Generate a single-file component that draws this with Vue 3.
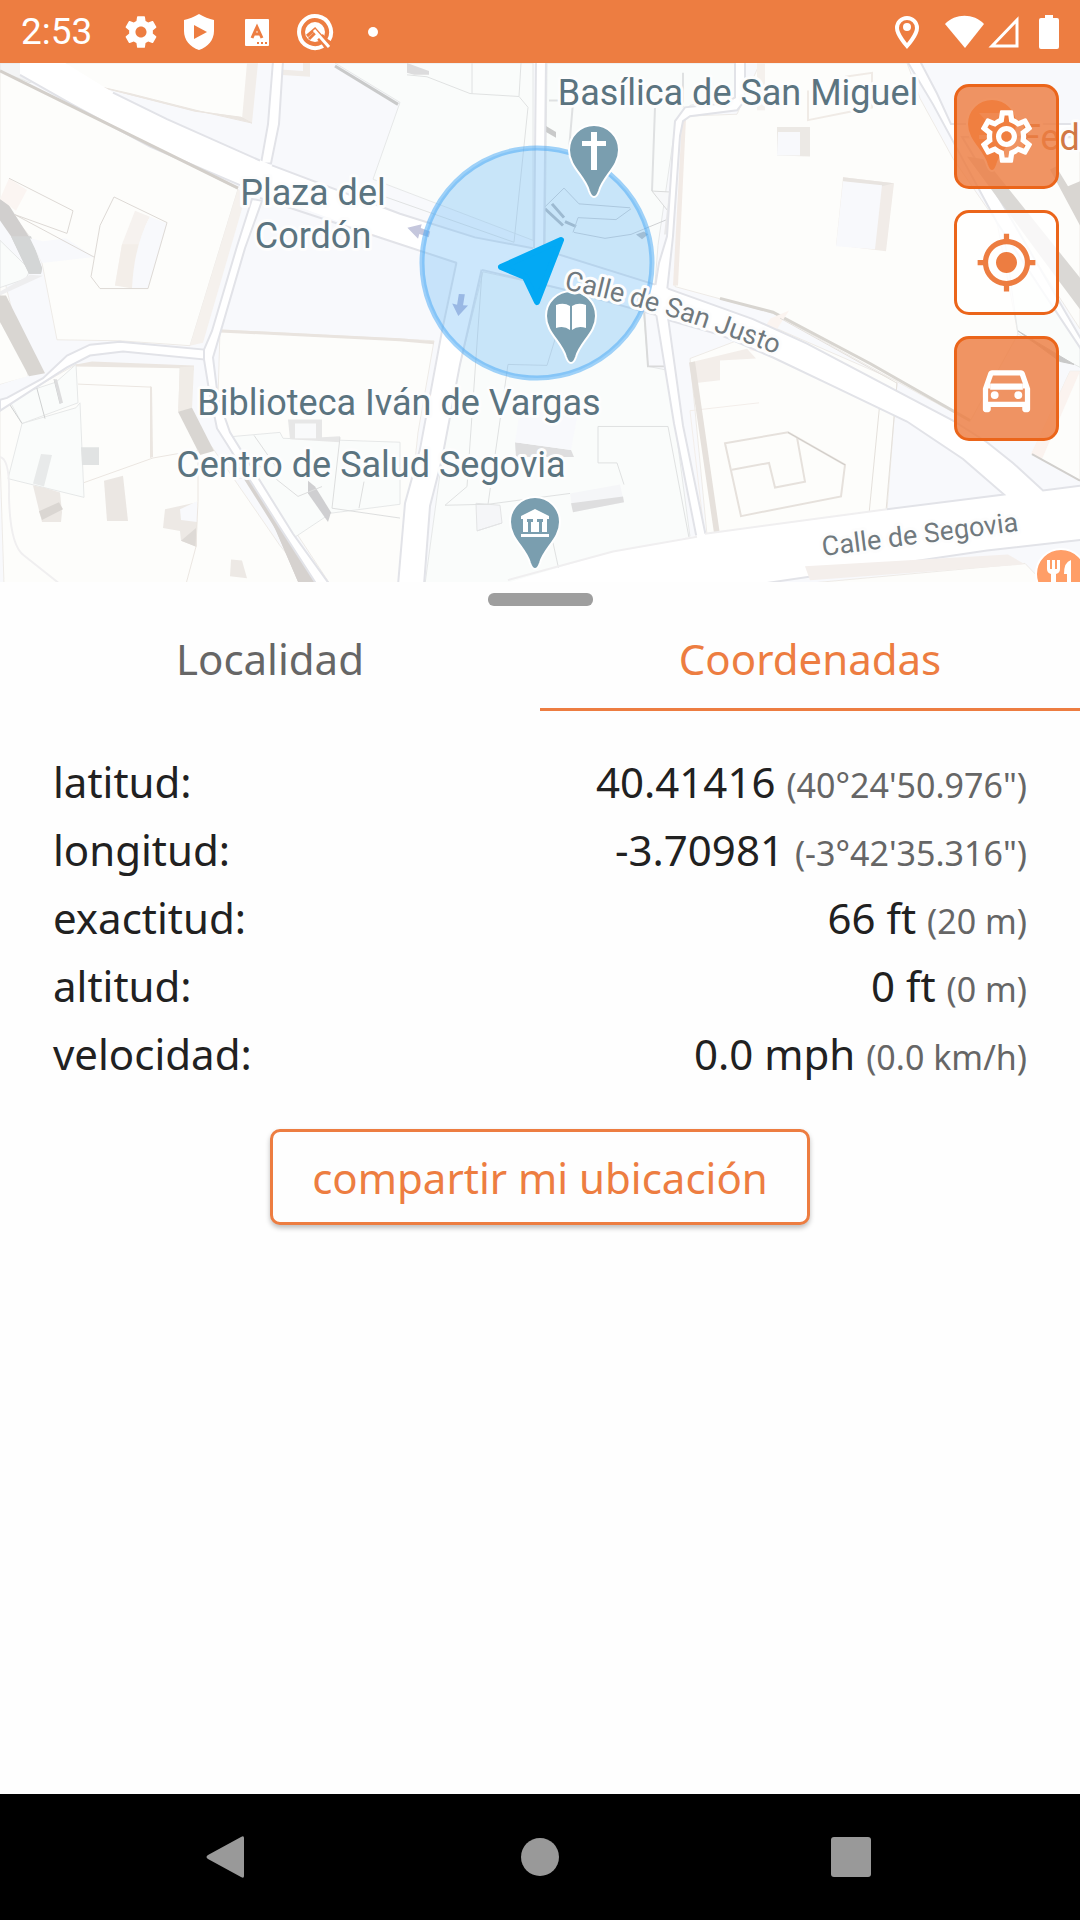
<script setup>
import { ref } from "vue";

const tabs = [
  { id: "town", label: "Localidad" },
  { id: "coords", label: "Coordenadas" },
];
const activeTab = ref("coords");

const rows = [
  { name: "latitud:", value: "40.41416", alt: "(40°24'50.976\")" },
  { name: "longitud:", value: "-3.70981", alt: "(-3°42'35.316\")" },
  { name: "exactitud:", value: "66 ft", alt: "(20 m)" },
  { name: "altitud:", value: "0 ft", alt: "(0 m)" },
  { name: "velocidad:", value: "0.0 mph", alt: "(0.0 km/h)" },
];

const pinPath =
  "M0 47c-3 0-4-3-5-6C-9 26-25 17-25 0A25 25 0 1 1 25 0C25 17 9 26 5 41c-1 3-2 6-5 6z";
</script>

<template>
  <div class="screen">
    <header class="status">
      <span class="clock">2:53</span>
      <div class="notifications">
        <svg width="38" height="38" viewBox="0 0 24 24" fill="#fff">
          <path d="M19.43 12.98c.04-.32.07-.64.07-.98s-.03-.66-.07-.98l2.11-1.65c.19-.15.24-.42.12-.64l-2-3.46c-.12-.22-.39-.3-.61-.22l-2.49 1c-.52-.4-1.08-.73-1.69-.98l-.38-2.65C14.46 2.18 14.25 2 14 2h-4c-.25 0-.46.18-.49.42l-.38 2.65c-.61.25-1.17.59-1.69.98l-2.49-1c-.23-.09-.49 0-.61.22l-2 3.46c-.13.22-.07.49.12.64l2.11 1.65c-.04.32-.07.65-.07.98s.03.66.07.98l-2.11 1.65c-.19.15-.24.42-.12.64l2 3.46c.12.22.39.3.61.22l2.49-1c.52.4 1.08.73 1.69.98l.38 2.65c.03.24.24.42.49.42h4c.25 0 .46-.18.49-.42l.38-2.65c.61-.25 1.17-.59 1.69-.98l2.49 1c.23.09.49 0 .61-.22l2-3.46c.12-.22.07-.49-.12-.64l-2.11-1.65zM12 15.5c-1.93 0-3.5-1.57-3.5-3.5s1.57-3.5 3.5-3.5 3.5 1.57 3.5 3.5-1.57 3.5-3.5 3.5z" />
        </svg>
        <svg width="38" height="38" viewBox="0 0 38 38">
          <path d="M19 1C14 4 9 6 4 7v11c0 9 6 16 15 19 9-3 15-10 15-19V7C29 6 24 4 19 1z" fill="#fff" />
          <path d="M14 12v14l13-7z" fill="#ed7d41" />
        </svg>
        <svg width="38" height="38" viewBox="0 0 38 38">
          <rect x="7" y="6" width="24" height="27" rx="1" fill="#fff" />
          <path d="M14 25l5-11 5 11M16 21h6" fill="none" stroke="#ed7d41" stroke-width="3" />
          <path d="M19 29h2v2h-2zM23 29h2v2h-2zM27 29h2v2h-2z" fill="#ed7d41" />
        </svg>
        <svg width="38" height="38" viewBox="0 0 38 38">
          <path d="M27 33A16 16 0 1 1 33 27" fill="none" stroke="#fff" stroke-width="4" />
          <circle cx="19" cy="19" r="10" fill="#fff" />
          <path d="M11 23l8-7 14 16" fill="none" stroke="#ed7d41" stroke-width="3" />
          <path d="M13 26l7-7" stroke="#ed7d41" stroke-width="3" />
          <path d="M24 24l10 10" stroke="#ed7d41" stroke-width="8" />
          <path d="M26 22l8 9" stroke="#ed7d41" stroke-width="2" />
          <path d="M18 17l15 17" stroke="#fff" stroke-width="3" />
        </svg>
        <svg width="38" height="38" viewBox="0 0 38 38">
          <circle cx="19" cy="19" r="5" fill="#fff" />
        </svg>
      </div>
      <div class="signals">
        <svg width="24" height="36" viewBox="0 0 24 36">
          <path d="M12 4a10 10 0 0 0-10 10c0 7 10 18 10 18s10-11 10-18A10 10 0 0 0 12 4z" fill="none" stroke="#fff" stroke-width="4" />
          <circle cx="12" cy="13" r="4" fill="#fff" />
        </svg>
        <svg class="wifi" width="39" height="36" viewBox="0 0 39 36">
          <path d="M0 10C10-1 29-1 39 10L20 34z" fill="#fff" />
        </svg>
        <svg width="32" height="36" viewBox="0 0 32 36">
          <path d="M4 32L29 6v26z" fill="none" stroke="#fff" stroke-width="3" />
        </svg>
        <svg class="battery" width="20" height="36" viewBox="0 0 20 36">
          <path d="M6 1h8v3h4q2 0 2 2v27q0 2-2 2H2q-2 0-2-2V6q0-2 2-2h4z" fill="#fff" />
        </svg>
      </div>
    </header>

    <section class="map">
      <svg class="tiles" viewBox="0 0 1080 519" preserveAspectRatio="xMidYMid slice">
        <rect width="1080" height="519" fill="#f8f9fc" />

        <g transform="scale(1 .985)">
          <!-- buildings -->
          <g fill="#fdfdfb" stroke="#eeebe7" stroke-width="1">
            <path d="M0 7L238 128L190 287L120 282L57 281L42 203L32 179L0 138z" />
            <path d="M62 0L95 23L193 48L250 57L256 0z" />
            <path d="M0 202V326L28 317z" />
            <path d="M76 306L180 308L179 350L212 390L280 490L312 529H4L0 400V350z" />
            <path d="M220 271L434 282L418 375L402 529H330L230 375L218 340z" />
            <path d="M685 54L737 52L760 0H907L920 36L953 97L997 162L1018 275L970 364L853 299L773 254L675 227z" />
            <path d="M690 300L773 268L897 323L887 453L720 480L707 479z" />
            <path d="M1070 313H1080V424L1032 397z" />
            <path d="M800 529L1025 508L1045 529z" />
            <path d="M960 76H1080V270L1000 145z" />
          </g>
          <g fill="#fafcfb" stroke="#e6e8e8" stroke-width="1">
            <path d="M335 0L400 40L373 118L533 180V0z" />
            <path d="M547 0H735V35L690 43L676 58L658 185L655 225L545 190z" />
            <path d="M483 212L560 229L642 232L648 308L668 312L690 481L540 529H425L442 402L460 306z" />
            <path d="M0 180L30 210L26 219L0 228zM80 345L84 441L8 422L22 366L76 350zM8 340L56 324L76 306L78 345L22 366z" />
            <path d="M224 380L280 375L283 381L400 385V448L331 457L294 482z" />
            <path d="M0 0H60L30 20L0 8z" fill="#f3f4f5" />
            <path d="M1000 145L1080 280V309L1018 275z" />
          </g>

          <!-- extruded walls and roof edges -->
          <path d="M238 128L246 134L203 284L190 287z" fill="#f5f1ed" />
          <path d="M0 138L8 143L30 178L42 208L41 214H29L11 176L0 160z" fill="#d1cfce" />
          <path d="M11 176L31 176L42 208L41 214H29z" fill="#d4d6d6" />
          <path d="M0 232L30 215L43 216L0 236z" fill="#eeeeef" />
          <path d="M0 236L6 236L45 315L29 318L0 263z" fill="#d9d6d2" />
          <path d="M0 264V326L28 318z" fill="#fdfdfb" />
          <path d="M9 117L27 129L16 150L0 138z" fill="#fbf5f2" />
          <path d="M43 181L66 178L94 197L42 203L30 178z" fill="#f8f9fc" />
          <path d="M135 150L150 156Q138 175 138 228L115 226L122 184z" fill="#f6f2ef" />
          <path d="M122 184H140L132 229L115 226z" fill="#f3eee9" />
          <path d="M150 156L167 163L148 229H132Q134 185 150 156z" fill="#f8f9fc" />
          <path d="M247 0H258L252 61L242 57z" fill="#f2eeea" />
          <path d="M95 23L130 31L200 49L252 61L241 55L195 49z" fill="#ebe6e1" stroke="#ebe6e1" />
          <path d="M273 6L303 8V0H310V14L278 12z" fill="#f0ece8" />
          <path d="M335 3L398 42" stroke="#c9caca" stroke-width="3" />
          <path d="M76 306L92 303L194 307V312L180 310L76 308z" fill="#ebe6e1" />
          <path d="M180 309L194 308L192 351L178 354z" fill="#f0ece7" />
          <path d="M178 354L192 350L214 394L200 398z" fill="#d9d6d2" />
          <path d="M232 420L252 424L276 475L299 529H317L293 480L255 424z" fill="#d6d2cf" />
          <path d="M230 400L250 422L286 467L317 529H299L276 474z" fill="#d6d2cf" />
          <path d="M220 272L400 281L434 284" stroke="#e9e4df" stroke-width="3" fill="none" />
          <path d="M81 390H99V408H82z" fill="#e1e3e3" />
          <path d="M41 397L52 398L44 430L33 427z" fill="#e8eaea" />
          <path d="M33 429L44 431L60 436L62 456L61 466H42L39 454z" fill="#ece8e4" />
          <path d="M39 455L59 446L63 453L42 464z" fill="#dad6d2" />
          <path d="M104 424L123 419L128 465H107z" fill="#ebe7e3" />
          <path d="M165 453L197 446V491L181 485L180 475L163 472z" fill="#ede9e5" />
          <path d="M180 453L197 445V466L181 464z" fill="#f8f9fc" />
          <path d="M181 485L196 472V491z" fill="#dedad6" />
          <path d="M231 504L242 505L247 523L230 521z" fill="#ede9e5" />
          <path d="M288 362L322 362V380L340 379V385L290 382z" fill="#e7e7e7" />
          <path d="M295 366H316V381H295z" fill="#f9fafb" />
          <path d="M308 424L315 430L331 456L328 466L308 437z" fill="#cfcfd1" />
          <path d="M150 328L152 329L153 400L150 401z" fill="#ebe6e1" />
          <path d="M78 326L150 329M84 426L153 401L198 393V445M198 445L196 491L186 529" fill="none" stroke="#ebe6e1" />
          <path d="M9 117L73 150L67 173L15 154L94 197M114 136L167 162L148 229H100L91 217L100 165z" fill="none" stroke="#ddd9d5" />
          <path d="M36 327L45 361M54 321L60 346M6 341L22 366" fill="none" stroke="#cfd1d1" />
          <path d="M54 321L57 321L63 345L60 346z" fill="#dcdcdd" />
          <path d="M227 383L298 440L322 430M254 378L276 410M340 380L332 452L400 462M364 425L359 452" fill="none" stroke="#dddede" />
          <path d="M407 0L429 8V12L414 12L407 10z" fill="#dcdcdd" />
          <path d="M407 12L427 14L470 31L519 34L528 45L514 182L380 134M472 0V31M521 0L519 34" fill="none" stroke="#e0e2e2" />
          <path d="M546 64L556 70V76L546 70z" fill="#c9caca" />
          <path d="M549 38H600M573 40L569 88M655 45L652 130M683 10V45" fill="none" stroke="#dfe1e2" stroke-width="2" />
          <path d="M545 148L563 165M552 143L564 157M565 161L576 166" fill="none" stroke="#b9bcbf" stroke-width="3" />
          <path d="M564 127L579 143L630 147M573 172L578 157L616 159L631 148M574 172L605 178L631 174L674 156M655 130L674 158M564 127L545 146" fill="none" stroke="#cfd1d3" />
          <path d="M636 174L644 171L648 174L642 179z" fill="#bfc2c5" />
          <path d="M652 130L671 131L674 158z" fill="#f7f8f9" stroke="#d9dada" />
          <path d="M676 73H680L667 174L664 174z" fill="#e9e9ea" />
          <path d="M682 56L686 56L678 226L673 226z" fill="#f2ebe6" />
          <path d="M777 65H810V95L777 94z" fill="#ece9e5" />
          <path d="M778 70H800V94H777z" fill="#f8f9fc" />
          <path d="M843 116L894 122L886 191L836 185z" fill="#f1ece8" />
          <path d="M843 116L894 122L882 125L843 120z" fill="#e8e4e0" />
          <path d="M843 120L882 124L875 189L836 186z" fill="#f8f9fc" />
          <path d="M720 239L773 253L870 305L970 363" fill="none" stroke="#d8d5d0" stroke-width="3" />
          <path d="M757 0H765V48H757z" fill="#f5f1ed" />
          <path d="M808 28V58L872 45V10L845 14" fill="none" stroke="#f0ebe6" stroke-width="2" />
          <path d="M690 304L747 290L756 300L720 302V322L694 325z" fill="#f3eeea" />
          <path d="M759 345L690 353L706 492" fill="none" stroke="#f3eeea" />
          <path d="M689 304L695 303L720 479L716 491z" fill="#e6e1dc" />
          <path d="M773 262L780 259L760 290L755 289z" fill="#fbf4f0" stroke="#fbf4f0" stroke-width="7" />
          <path d="M780 259L897 325L886 455L869 458L881 333L773 272" fill="none" stroke="#e4e0db" />
          <path d="M725 386L788 375L845 408L841 440L741 460zM732 413L769 406L775 431L805 425L797 380" fill="none" stroke="#e6e1dc" stroke-width="2" />
          <path d="M788 375L845 408" stroke="#cfccc8" />
          <path d="M515 385L571 393L574 400H516z" fill="#dededf" />
          <path d="M520 351L577 360L571 393L515 385z" fill="#f8f9fc" />
          <path d="M570 437L620 428L624 446L573 456z" fill="#f5f6f8" />
          <path d="M571 447L623 440L624 446L573 456z" fill="#dededf" />
          <path d="M476 447L500 449L502 467L477 475zM477 475L502 467" fill="#f5f6f8" stroke="#e3e4e5" />
          <path d="M598 369H668L692 498L560 527M598 369V406H617L624 428M482 212L467 430L445 449L488 448L570 437M508 306L547 307L560 264M508 306L488 448M553 487L562 529" fill="none" stroke="#dfe1e1" />
          <path d="M587 225L643 235L648 308H665L668 311" fill="none" stroke="#d9dada" stroke-width="2" />

          <!-- streets -->
          <g fill="#fff" stroke="#e2e3e8" stroke-width="2">
            <path d="M0 342L7 340L43 320L67 297L90 286L120 283L204 291L204 301L123 293L90 297L67 309L0 353z" />
            <path d="M252 138L237 186L212 272L204 291V301L209 332L217 371L277 467L317 530H330L293 478L230 375L218 340L213 299L220 275L245 188L262 140z" />
            <path d="M273-2L268 62L261 102H271L279 62L283-2z" />
            <path d="M536-2L534 192H544L546-2z" />
            <path d="M457 200L442 272L420 392L405 447L398 530H424L430 450L442 402L460 306L482 208z" />
            <path d="M735-2V35L725 41L685 45L675 59L673 83L667 176L659 203L655 228L667 232L673 176L680 74L683 59L690 54L737 48L745 38V-2z" />
            <path d="M656 254L674 366L697 484L706 481L683 368L668 258z" />
            <path d="M907-2L933 42L997 162L1082 292V282L1007 151L962 75H1082V62H951L937 31L920-2z" />
          </g>
          <path d="M1082 429L1043 434L1013 406L987 385L953 363L807 285L753 260L667 229L545 190L475 177L400 153L272 104L167 57L113 30L62-2H20V12L150 85L240 124L400 184L457 203L482 210L560 229L657 256L720 276L773 299L833 328L907 364L963 402L1004 438L887 453L705 478L613 496L500 530H753L987 495L1082 484z" fill="#fff" />
          <g fill="none" stroke="#e2e3e8" stroke-width="2">
            <path d="M1082 429L1043 434L1013 406L987 385L953 363L807 285L753 260L668 229M655 225L545 190M533 188L475 177L400 153L272 104M260 99L167 57L113 30" />
            <path d="M20 12L72 42L150 85L240 124M260 137L400 184L457 203M482 210L560 229L656 256M668 261L720 276L773 299L833 328L907 364L963 402L1004 438L887 453M753 530L987 495L1082 484" />
            <path d="M887 453L705 478M697 481L613 496L508 525" stroke="#f0eff0" />
          </g>
          <path d="M0 8L238 127" stroke="#d3cfca" stroke-width="3" />
          <path d="M967 95L985 98L1080 218V250L1052 212z" fill="#dad8d5" />
          <path d="M1018 272L1074 306L1060 303z" fill="#c9c9c9" stroke="#c9c9c9" />
          <path d="M1056 105L1068 125L1080 120V165L1050 108z" fill="#d9d6d2" />
          <path d="M1070 313H1080L1042 402L1031 397z" fill="#fbf3ef" />
          <path d="M1032 397L1080 424" stroke="#d1cfcc" stroke-width="2" />
          <path d="M805 511L1008 499L1025 509L810 525z" fill="#f4efec" />
          <path d="M0 400Q10 402 9 440Q10 490 24 500L60 529" fill="none" stroke="#f0eff0" stroke-width="2" />
        </g>

        <!-- one-way arrows -->
        <path d="M0 8L-13 0L0-7V-3L10-2V4L0 3z" transform="translate(420 168) rotate(14)" fill="#c5c7dd" />
        <path d="M-8-2L-3-1L-2-12H4L3-1L8-1L-1 10z" transform="translate(460 243) rotate(4)" fill="#b4b9dc" />

        <!-- accuracy circle -->
        <circle cx="537" cy="200" r="115" fill="#64b5f6" fill-opacity=".33" stroke="#42a5f5" stroke-opacity=".5" stroke-width="5" />

        <g fill="#7a9eaf" stroke="#fff" stroke-width="2">
          <path :d="pinPath" transform="translate(594 87)" />
          <path :d="pinPath" transform="translate(571 253)" />
          <path :d="pinPath" transform="translate(535 459)" />
        </g>
        <g fill="#fff">
          <path d="M591 69h6v9h9v5h-9v24h-6v-24h-9v-5h9z" />
          <path d="M556 242q8-3 14 1v24q-6-5-14-2zM586 242q-8-3-14 1v24q6-5 14-2z" />
          <path d="M535 446l14 7v3h-2v13h-24v-13h-2v-3zM521 471h28v3h-28z" />
        </g>
        <path d="M527 456h6v3h-2v10h-3v-10h-1zM537 456h6v3h-1v10h-3v-10h-2z" fill="#7a9eaf" />
        <g fill="#ff8a3d" stroke="#fff" stroke-width="2">
          <path :d="pinPath" transform="translate(992 61)" />
          <path :d="pinPath" transform="translate(1061 511)" fill="#ff9e67" />
        </g>
        <path d="M979 50h26l-13 14zM979 72h14v4h-14z" fill="#ffc29b" />
        <path d="M1047 497h3v9h2v-9h3v9h2v-9h3v9q0 4-4 5v12h-5v-12q-4-1-4-5zM1071 497v26h-4v-12h-3q0-12 7-14z" fill="#fff" />

        <path d="M561 177L501 204L525 214L537 239z" fill="#03a9f4" stroke="#03a9f4" stroke-width="6" stroke-linejoin="round" />

        <g class="place">
          <text x="738" y="42" text-anchor="middle">Basílica de San Miguel</text>
          <text x="313" y="142" text-anchor="middle">Plaza del</text>
          <text x="313" y="185" text-anchor="middle">Cordón</text>
          <text x="399" y="352" text-anchor="middle">Biblioteca Iván de Vargas</text>
          <text x="371" y="414" text-anchor="middle">Centro de Salud Segovia</text>
          <text class="food" x="1021" y="87">Fed</text>
        </g>
        <path id="san-justo" d="M564 226Q670 248 790 297" fill="none" />
        <path id="segovia" d="M823 493L1080 460" fill="none" />
        <g class="street">
          <text><textPath href="#san-justo">Calle de San Justo</textPath></text>
          <text><textPath href="#segovia">Calle de Segovia</textPath></text>
        </g>
      </svg>

      <div class="controls">
        <button type="button" aria-label="Ajustes">
          <svg viewBox="0 0 24 24">
            <path d="M19.43 12.98c.04-.32.07-.64.07-.98 0-.34-.03-.66-.07-.98l2.11-1.65c.19-.15.24-.42.12-.64l-2-3.46c-.09-.16-.26-.25-.44-.25-.06 0-.12.01-.17.03l-2.49 1c-.52-.4-1.08-.73-1.69-.98l-.38-2.65C14.46 2.18 14.25 2 14 2h-4c-.25 0-.46.18-.49.42l-.38 2.65c-.61.25-1.17.59-1.69.98l-2.49-1c-.06-.02-.12-.03-.18-.03-.17 0-.34.09-.43.25l-2 3.46c-.13.22-.07.49.12.64l2.11 1.65c-.04.32-.07.65-.07.98 0 .33.03.66.07.98l-2.11 1.65c-.19.15-.24.42-.12.64l2 3.46c.09.16.26.25.44.25.06 0 .12-.01.17-.03l2.49-1c.52.4 1.08.73 1.69.98l.38 2.65c.03.24.24.42.49.42h4c.25 0 .46-.18.49-.42l.38-2.65c.61-.25 1.17-.59 1.69-.98l2.49 1c.06.02.12.03.18.03.17 0 .34-.09.43-.25l2-3.46c.12-.22.07-.49-.12-.64l-2.11-1.65zm-1.98-1.71c.04.31.05.52.05.73 0 .21-.02.43-.05.73l-.14 1.13.89.7 1.08.84-.7 1.21-1.27-.51-1.04-.42-.9.68c-.43.32-.84.56-1.25.73l-1.06.43-.16 1.13-.2 1.35h-1.4l-.19-1.35-.16-1.13-1.06-.43c-.43-.18-.83-.41-1.23-.71l-.91-.7-1.06.43-1.27.51-.7-1.21 1.08-.84.89-.7-.14-1.13c-.03-.31-.05-.54-.05-.74s.02-.43.05-.73l.14-1.13-.89-.7-1.08-.84.7-1.21 1.27.51 1.04.42.9-.68c.43-.32.84-.56 1.25-.73l1.06-.43.16-1.13.2-1.35h1.39l.19 1.35.16 1.13 1.06.43c.43.18.83.41 1.23.71l.91.7 1.06-.43 1.27-.51.7 1.21-1.07.85-.89.7.14 1.13zM12 8c-2.21 0-4 1.79-4 4s1.79 4 4 4 4-1.79 4-4-1.79-4-4-4zm0 6c-1.1 0-2-.9-2-2s.9-2 2-2 2 .9 2 2-.9 2-2 2z" />
          </svg>
        </button>
        <button type="button" class="light" aria-label="Mi ubicación">
          <svg viewBox="0 0 24 24">
            <path d="M12 8c-2.21 0-4 1.79-4 4s1.79 4 4 4 4-1.79 4-4-1.79-4-4-4zm8.94 3c-.46-4.17-3.77-7.48-7.94-7.94V1h-2v2.06C6.83 3.52 3.52 6.83 3.06 11H1v2h2.06c.46 4.17 3.77 7.48 7.94 7.94V23h2v-2.06c4.17-.46 7.48-3.77 7.94-7.94H23v-2h-2.06zM12 19c-3.87 0-7-3.13-7-7s3.13-7 7-7 7 3.13 7 7-3.13 7-7 7z" />
          </svg>
        </button>
        <button type="button" aria-label="Coche">
          <svg viewBox="0 0 24 24">
            <path d="M18.92 6.01C18.72 5.42 18.16 5 17.5 5h-11c-.66 0-1.21.42-1.42 1.01L3 12v8c0 .55.45 1 1 1h1c.55 0 1-.45 1-1v-1h12v1c0 .55.45 1 1 1h1c.55 0 1-.45 1-1v-8l-2.08-5.99zM6.85 7h10.29l1.08 3.11v1.89H5.77v-1.89L6.85 7zM19 17H5v-5h14v5z" />
            <path d="M5.77 10.11h12.45V12.5H5.77z" />
            <circle cx="7.5" cy="14.5" r="1.5" />
            <circle cx="16.5" cy="14.5" r="1.5" />
          </svg>
        </button>
      </div>
    </section>

    <main class="sheet">
      <div class="handle"></div>
      <div class="tabs" role="tablist">
        <button
          v-for="tab in tabs"
          :key="tab.id"
          type="button"
          role="tab"
          :aria-selected="activeTab === tab.id"
          :class="{ active: activeTab === tab.id }"
          @click="activeTab = tab.id"
        >
          {{ tab.label }}
        </button>
      </div>
      <table class="data">
        <tbody>
          <tr v-for="row in rows" :key="row.name">
            <th scope="row">{{ row.name }}</th>
            <td>{{ row.value }} <small>{{ row.alt }}</small></td>
          </tr>
        </tbody>
      </table>
      <button type="button" class="share">compartir mi ubicación</button>
    </main>

    <nav class="system">
      <button type="button" aria-label="Atrás">
        <svg viewBox="0 0 48 48"><path d="M40 5v38q0 3-3 1L4 26q-3-2 0-4L37 4q3-2 3 1z" /></svg>
      </button>
      <button type="button" aria-label="Inicio">
        <svg viewBox="0 0 48 48"><circle cx="24" cy="24" r="19" /></svg>
      </button>
      <button type="button" aria-label="Recientes">
        <svg viewBox="0 0 48 48"><rect x="3" y="4" width="40" height="40" rx="3" /></svg>
      </button>
    </nav>
  </div>
</template>

<style>
body {
  margin: 0;
  background: #fefefe;
}
</style>

<style scoped>
.screen {
  display: flex;
  flex-direction: column;
  min-height: 100vh;
  background: #fefefe;
  color: #212121;
  font-family: "Noto Sans", "Open Sans", sans-serif;
}

button {
  font: inherit;
  cursor: pointer;
}

.status {
  display: flex;
  align-items: center;
  height: 63px;
  padding: 0 21px;
  background: #ed7d41;
}

.clock {
  color: #fff;
  font-family: Roboto, sans-serif;
  font-size: 37px;
  line-height: 42px;
}

.notifications {
  display: flex;
  gap: 20px;
  margin-left: 30px;
}

.signals {
  display: flex;
  margin-left: auto;
}

.wifi {
  margin: 0 4px 0 26px;
}

.battery {
  margin-left: 19px;
}

.map {
  position: relative;
  aspect-ratio: 1080 / 519;
  overflow: hidden;
}

.tiles {
  display: block;
  width: 100%;
  height: 100%;
}

.place,
.street {
  font-family: Roboto, sans-serif;
  paint-order: stroke;
  stroke: #fdfdfd;
  stroke-width: 6px;
  stroke-linejoin: round;
}

.place {
  fill: #5b7480;
  font-size: 36px;
}

.food {
  fill: #d17845;
}

.street {
  fill: #70797e;
  font-size: 27px;
}

/* floats over the map */
.controls {
  position: absolute;
  top: 21px;
  right: 21px;
  display: flex;
  flex-direction: column;
  gap: 21px;
}

.controls button {
  display: grid;
  place-items: center;
  width: 105px;
  height: 105px;
  padding: 0;
  border: 3px solid #eb651a;
  border-radius: 15px;
  background: rgba(237, 125, 65, 0.82);
  fill: #fff;
}

.controls .light {
  background: rgba(255, 255, 255, 0.8);
  fill: #ed7d41;
}

.controls svg {
  width: 63px;
  height: 63px;
}

.sheet {
  display: flex;
  flex-direction: column;
  align-items: center;
  padding-top: 11px;
}

.handle {
  width: 105px;
  height: 13px;
  border-radius: 6px;
  background: #9e9e9e;
}

.tabs {
  display: flex;
  width: 100%;
}

.tabs button {
  flex: 1;
  padding: 23px 0 19px;
  border: 0;
  border-bottom: 3px solid transparent;
  background: none;
  color: #666;
  font-size: 42px;
  line-height: 60px;
}

.tabs .active {
  border-color: #ed7d41;
  color: #ed7d41;
}

.data {
  width: 100%;
  margin-top: 37px;
  padding: 0 53px;
  border-spacing: 0;
  font-size: 42px;
  line-height: 68px;
}

.data th,
.data td {
  padding: 0;
  font-weight: 400;
  text-align: left;
}

.data td {
  text-align: right;
}

.data small {
  color: #666;
  font-size: 34px;
  line-height: 34px;
}

.share {
  width: 50%;
  height: 96px;
  margin: 41px 0;
  padding: 0;
  border: 3px solid #ed7d41;
  border-radius: 10px;
  background: #fefefe;
  box-shadow: 0 3px 5px rgba(0, 0, 0, 0.25);
  color: #ed7d41;
  font-size: 42px;
}

.system {
  display: flex;
  height: 126px;
  margin-top: auto;
  padding: 0 72px;
  background: #000;
}

.system button {
  flex: 1;
  display: grid;
  place-items: center;
  border: 0;
  background: none;
  fill: #999;
}

.system svg {
  width: 48px;
  height: 48px;
}
</style>
